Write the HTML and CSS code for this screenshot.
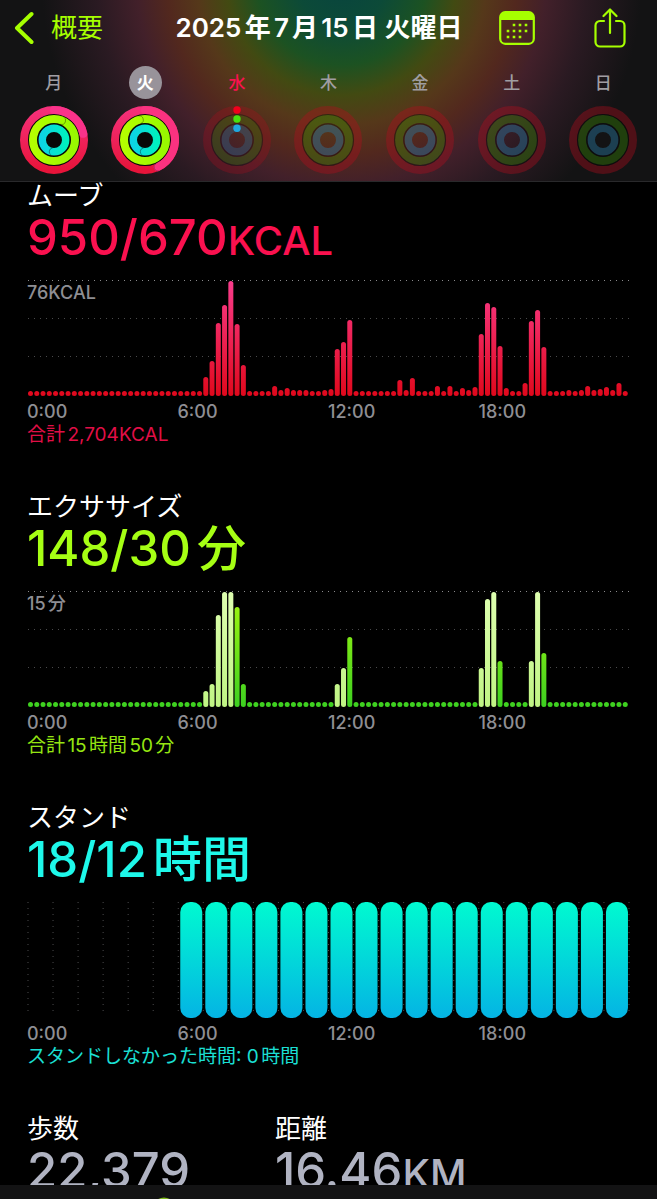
FILE: index.html
```html
<!DOCTYPE html>
<html lang="ja">
<head>
    <meta charset="UTF-8">
    <meta name="viewport" content="width=device-width, initial-scale=1.0">
    <title>アクティビティ</title>
    <link rel="stylesheet" href="styles.css">
</head>
<body>
    <!-- Shared gradients and ring shapes -->
    <svg class="defs" width="0" height="0" aria-hidden="true">
        <defs>
            <linearGradient id="ring-move" x1="0" y1="1" x2="0" y2="0">
                <stop offset="0" stop-color="#e8143a"/>
                <stop offset="1" stop-color="#f5307a"/>
            </linearGradient>
            <linearGradient id="ring-exercise" x1="0" y1="0" x2="1" y2="0">
                <stop offset="0" stop-color="#b4ff00"/>
                <stop offset="1" stop-color="#98f800"/>
            </linearGradient>
            <linearGradient id="ring-stand" x1="0" y1="0" x2="1" y2="0">
                <stop offset="0" stop-color="#0cd4e4"/>
                <stop offset="1" stop-color="#00f0c0"/>
            </linearGradient>
            <linearGradient id="bar-move" gradientUnits="userSpaceOnUse" x1="0" y1="0" x2="0" y2="116">
                <stop offset="0" stop-color="#fa3c8c"/>
                <stop offset="1" stop-color="#e0081c"/>
            </linearGradient>
            <linearGradient id="bar-exercise" gradientUnits="userSpaceOnUse" x1="0" y1="0" x2="0" y2="116">
                <stop offset="0" stop-color="#a8f810"/>
                <stop offset="1" stop-color="#3cd020"/>
            </linearGradient>
            <linearGradient id="bar-workout" gradientUnits="userSpaceOnUse" x1="0" y1="0" x2="0" y2="116">
                <stop offset="0" stop-color="#deffb0"/>
                <stop offset="1" stop-color="#c0f484"/>
            </linearGradient>
            <linearGradient id="bar-stand" gradientUnits="userSpaceOnUse" x1="0" y1="0" x2="0" y2="116">
                <stop offset="0" stop-color="#00fad0"/>
                <stop offset="1" stop-color="#04b4e4"/>
            </linearGradient>
            <symbol id="rings-full" viewBox="0 0 68 68">
                <circle cx="34" cy="34" r="33" fill="#080808"/>
                <g fill="none" stroke-width="8">
                    <circle cx="34" cy="34" r="30" stroke="url(#ring-move)"/>
                    <circle cx="34" cy="34" r="21" stroke="url(#ring-exercise)"/>
                    <circle cx="34" cy="34" r="11.7" stroke-width="7.4" stroke="url(#ring-stand)"/>
                </g>
            </symbol>
            <symbol id="rings-empty" viewBox="0 0 68 68">
                <g fill="none" stroke-width="8">
                    <circle cx="34" cy="34" r="30" stroke="#b40c1c" stroke-opacity=".38"/>
                    <circle cx="34" cy="34" r="21" stroke="#3c9600" stroke-opacity=".34"/>
                    <circle cx="34" cy="34" r="11.7" stroke-width="7.4" stroke="#287ca8" stroke-opacity=".42"/>
                    <circle cx="34" cy="34" r="25.5" stroke="#000" stroke-opacity=".35" stroke-width="1.2"/>
                    <circle cx="34" cy="34" r="16.2" stroke="#000" stroke-opacity=".35" stroke-width="1.2"/>
                </g>
            </symbol>
        </defs>
    </svg>

    <header class="header">
        <nav class="nav-bar">
            <a href="#summary" class="back">
                <svg width="20" height="34" viewBox="0 0 20 34" aria-hidden="true"><path d="M17.5 3L3 17l14.500 14" fill="none" stroke="currentColor" stroke-width="4" stroke-linecap="round" stroke-linejoin="round"/></svg>
                <span>概要</span>
            </a>
            <h1>2025年7月15日 火曜日</h1>
            <div class="actions">
                <button type="button" aria-label="カレンダー">
                    <svg width="36" height="34" viewBox="0 0 36 34" aria-hidden="true">
                        <rect x="1.200" y="1.200" width="33.600" height="31.600" rx="5" fill="none" stroke="currentColor" stroke-width="2.200"/>
                        <path d="M1 9V6a5 5 0 0 1 5-5h24a5 5 0 0 1 5 5v3z" fill="currentColor"/>
                        <path d="M15 14h0M21 14h0M27 14h0M9 20h0M15 20h0M21 20h0M27 20h0M9 26h0M15 26h0M21 26h0" stroke="currentColor" stroke-width="2.600" stroke-linecap="square"/>
                    </svg>
                </button>
                <button type="button" aria-label="共有">
                    <svg width="32" height="40" viewBox="0 0 32 40" aria-hidden="true"><path d="M10 13H6a4.500 4.500 0 0 0-4.500 4.500v16.500A4.500 4.500 0 0 0 6 38.500h20a4.500 4.500 0 0 0 4.500-4.500V17.500A4.500 4.500 0 0 0 26 13h-4M16 25V2M9.500 8L16 1.500 22.500 8" fill="none" stroke="currentColor" stroke-width="2.200" stroke-linecap="round" stroke-linejoin="round"/></svg>
                </button>
            </div>
        </nav>

        <div class="week">
            <button type="button" class="day">
                <span>月</span>
                <svg class="rings" viewBox="0 0 68 68" aria-hidden="true">
                    <use href="#rings-full"/>
                    <path d="M34 4A30 30 0 0 1 63.300 27.800" fill="none" stroke="#fa328a" stroke-width="8" stroke-linecap="round"/>
                    <path d="M43.400 10.800A4 4 0 0 1 40.400 18.200M31.300 49A3.700 3.700 0 0 1 32.600 42" fill="none" stroke="#000" stroke-opacity=".35"/>
                </svg>
            </button>
            <button type="button" class="day selected">
                <span>火</span>
                <svg class="rings" viewBox="0 0 68 68" aria-hidden="true">
                    <use href="#rings-full"/>
                    <path d="M34 4A30 30 0 0 1 46.700 61.200" fill="none" stroke="#fa3280" stroke-width="8" stroke-linecap="round"/>
                    <path d="M48.400 64.800A4 4 0 0 1 45 57.600" fill="none" stroke="#000" stroke-opacity=".25"/>
                    <path d="M27.500 9.900A4 4 0 0 1 29.600 17.600M31.300 49A3.700 3.700 0 0 1 32.600 42" fill="none" stroke="#000" stroke-opacity=".35"/>
                </svg>
            </button>
            <button type="button" class="day today">
                <span>水</span>
                <svg class="rings" viewBox="0 0 68 68" aria-hidden="true">
                    <use href="#rings-empty" opacity=".75"/>
                    <circle cx="34" cy="4" r="3.700" fill="#f0001c"/>
                    <circle cx="34" cy="13" r="3.700" fill="#48e010"/>
                    <circle cx="34" cy="22.300" r="3.700" fill="#20a8e0"/>
                </svg>
            </button>
            <button type="button" class="day">
                <span>木</span>
                <svg class="rings" viewBox="0 0 68 68" aria-hidden="true"><use href="#rings-empty"/></svg>
            </button>
            <button type="button" class="day">
                <span>金</span>
                <svg class="rings" viewBox="0 0 68 68" aria-hidden="true"><use href="#rings-empty"/></svg>
            </button>
            <button type="button" class="day">
                <span>土</span>
                <svg class="rings" viewBox="0 0 68 68" aria-hidden="true"><use href="#rings-empty"/></svg>
            </button>
            <button type="button" class="day">
                <span>日</span>
                <svg class="rings" viewBox="0 0 68 68" aria-hidden="true"><use href="#rings-empty"/></svg>
            </button>
        </div>
    </header>

    <main class="content">
        <section class="metric move">
            <h2>ムーブ</h2>
            <p class="value">950/670<span class="unit">KCAL</span></p>
            <div class="chart">
                <svg id="move-chart" aria-hidden="true"></svg>
                <span class="scale">76KCAL</span>
            </div>
            <div class="axis"><span>0:00</span><span>6:00</span><span>12:00</span><span>18:00</span></div>
            <p class="total">合計2,704KCAL</p>
        </section>

        <section class="metric exercise">
            <h2>エクササイズ</h2>
            <p class="value">148/30分</p>
            <div class="chart">
                <svg id="exercise-chart" aria-hidden="true"></svg>
                <span class="scale">15分</span>
            </div>
            <div class="axis"><span>0:00</span><span>6:00</span><span>12:00</span><span>18:00</span></div>
            <p class="total">合計15時間50分</p>
        </section>

        <section class="metric stand">
            <h2>スタンド</h2>
            <p class="value">18/12時間</p>
            <div class="chart">
                <svg id="stand-chart" aria-hidden="true"></svg>
            </div>
            <div class="axis"><span>0:00</span><span>6:00</span><span>12:00</span><span>18:00</span></div>
            <p class="total">スタンドしなかった時間: 0時間</p>
        </section>

        <div class="summary">
            <section>
                <h2>歩数</h2>
                <p class="value">22,379</p>
            </section>
            <section>
                <h2>距離</h2>
                <p class="value">16.46<span class="unit">KM</span></p>
            </section>
        </div>
    </main>

    <footer class="tab-bar">
        <svg width="24" height="24" viewBox="0 0 24 24" aria-hidden="true"><circle cx="12" cy="12" r="10" fill="none" stroke="#7fb81c" stroke-width="3"/></svg>
    </footer>

    <script>
        const CHART_HEIGHT = 116;
        const IDLE = 5;

        // Bar heights by 15 minute slot, slots not listed are idle
        const move = {
            28: 19, 29: 35, 30: 73, 31: 91, 32: 115, 33: 72, 34: 31,
            39: 10, 40: 6, 41: 8, 42: 6, 43: 6, 44: 6, 47: 6, 48: 7,
            49: 47, 50: 54, 51: 76, 59: 16, 60: 6, 61: 18, 65: 10, 67: 10,
            69: 8, 70: 6, 71: 9, 72: 62, 73: 93, 74: 89, 75: 50, 76: 8,
            79: 13, 80: 75, 81: 86, 82: 49, 86: 6, 88: 6, 89: 10, 90: 6,
            91: 7, 92: 9, 93: 6, 94: 13
        };
        const exercise = {
            28: 16, 29: 23, 30: 92, 31: 115, 32: 115, 33: 100, 34: 23,
            49: 23, 50: 39, 51: 70, 72: 39, 73: 108, 74: 115, 75: 46,
            80: 46, 81: 115, 82: 54
        };
        const workoutSlots = [28, 29, 30, 31, 32, 49, 50, 72, 73, 74, 80, 81];

        function quarterHourChart(id, data, fillFor) {
            let svg = '';
            [1, 39, 77].forEach((y, i) => {
                svg += `<line class="grid-line${i ? '' : ' top'}" x1="0" x2="100%" y1="${y - 0.5}" y2="${y - 0.5}"/>`;
            });
            for (let i = 0; i < 96; i++) {
                const h = data[i] || IDLE;
                svg += `<rect x="${i / 96 * 100}%" y="${CHART_HEIGHT - h}" width="5" height="${h}" rx="2.5" fill="${fillFor(i)}"/>`;
            }
            document.getElementById(id).innerHTML = svg;
        }

        function standChart(id, firstHour) {
            let svg = '';
            for (let i = 0; i <= 24; i++) {
                svg += `<line class="grid-line" x1="${i / 24 * 100}%" x2="${i / 24 * 100}%" y1="0" y2="114"/>`;
            }
            svg += '<g transform="translate(2 0)">';
            for (let i = firstHour; i < 24; i++) {
                svg += `<rect x="${i / 24 * 100}%" y="0" width="22" height="${CHART_HEIGHT}" rx="10" fill="url(#bar-stand)"/>`;
            }
            svg += '</g>';
            document.getElementById(id).innerHTML = svg;
        }

        quarterHourChart('move-chart', move, () => 'url(#bar-move)');
        quarterHourChart('exercise-chart', exercise, i => workoutSlots.includes(i) ? 'url(#bar-workout)' : 'url(#bar-exercise)');
        standChart('stand-chart', 6);
    </script>
</body>
</html>
```

FILE: styles.css
```css
/* Base Reset and Variables */
* {
    margin: 0;
    padding: 0;
    box-sizing: border-box;
}

:root {
    --accent: #a6ff00;
    --move: #fa114f;
    --exercise: #a6ff14;
    --stand: #1ef8ea;
    --muted: #8e8e93;
    --stat: #b0b3c2;
    --bar: #131314;
}

body {
    height: 100vh;
    display: flex;
    flex-direction: column;
    background: #000;
    color: #fff;
    font-family: Inter, "Noto Sans CJK JP", sans-serif;
    text-autospace: normal;
}

button {
    border: none;
    background: none;
    color: inherit;
    font: inherit;
    cursor: pointer;
}

svg {
    display: block;
}

.defs {
    position: absolute;
}

/* Header */
.header {
    flex: none;
    border-bottom: 1px solid #29292b;
    padding: 0 8px 7px;
    background: radial-gradient(circle at 52% -20px, #08443f 0, #0c4a38 45px, #1c5222 85px, #424a12 115px, #55381a 145px, #52281e 175px, #42202a 205px, #2a1a22 245px, var(--bar) 300px);
}

.nav-bar {
    display: flex;
    align-items: center;
    height: 56px;
    margin-bottom: 10px;
    padding: 0 23px 0 6px;
}

.back {
    display: flex;
    align-items: center;
    gap: 17px;
    margin-right: 36px;
    color: var(--accent);
    font-size: 26px;
    line-height: 36px;
    text-decoration: none;
}

.nav-bar h1 {
    flex: 1;
    font-size: 26px;
    font-weight: 600;
    line-height: 36px;
    text-align: center;
    white-space: nowrap;
}

.actions {
    display: flex;
    align-items: center;
    gap: 59px;
    color: var(--accent);
}

/* Week strip */
.week {
    display: grid;
    grid-template-columns: repeat(7, 1fr);
}

.day {
    display: flex;
    flex-direction: column;
    align-items: center;
    gap: 7px;
    color: #a09ea2;
    font-size: 17px;
    font-weight: 500;
}

.day span {
    width: 33px;
    height: 33px;
    border-radius: 50%;
    line-height: 34px;
    text-align: center;
}

.day.selected span {
    background: #98939a;
    color: #fff;
    font-weight: 700;
}

.day.today span {
    color: var(--move);
}

.rings {
    width: 68px;
    height: 68px;
}

/* Metrics */
.content {
    flex: 1;
    min-height: 0;
    padding: 0 28px 0 27px;
    overflow: hidden;
}

.metric {
    margin-bottom: 45px;
}

.metric:first-child {
    margin-top: -2px;
}

h2 {
    font-size: 26px;
    font-weight: 400;
    line-height: 32px;
}

.value {
    font-size: 49px;
    font-weight: 500;
    line-height: 52px;
    white-space: nowrap;
}

.unit {
    font-size: 40px;
    line-height: 1;
}

.move .value,
.move .total {
    color: var(--move);
}

.exercise .value,
.exercise .total {
    color: var(--exercise);
}

.stand .value,
.stand .total {
    color: var(--stand);
}

/* Charts */
.chart {
    position: relative;
    height: 117px;
    margin: 16px 0 3px;
}

.chart svg {
    width: 100%;
    height: 117px;
    padding-left: 1px;
    overflow: visible;
}

.grid-line {
    stroke: #4a4a4c;
    stroke-dasharray: 1 5;
}

.grid-line.top {
    stroke: #8a8a8c;
}

.scale {
    position: absolute;
    top: 2px;
    left: 0;
    color: var(--muted);
    font-size: 18px;
    font-weight: 500;
    line-height: 22px;
}

.axis {
    display: grid;
    grid-template-columns: repeat(4, 1fr);
    color: var(--muted);
    font-size: 18px;
    font-weight: 500;
    line-height: 24px;
}

.total {
    font-size: 19px;
    line-height: 22px;
    opacity: 0.9;
}

/* Steps and distance */
.summary {
    display: grid;
    grid-template-columns: 7fr 10fr;
}

.summary .value {
    color: var(--stat);
}

/* Tab bar */
.tab-bar {
    flex: none;
    height: 14px;
    padding: 12px 0 0 152px;
    background: var(--bar);
    overflow: hidden;
}
```
